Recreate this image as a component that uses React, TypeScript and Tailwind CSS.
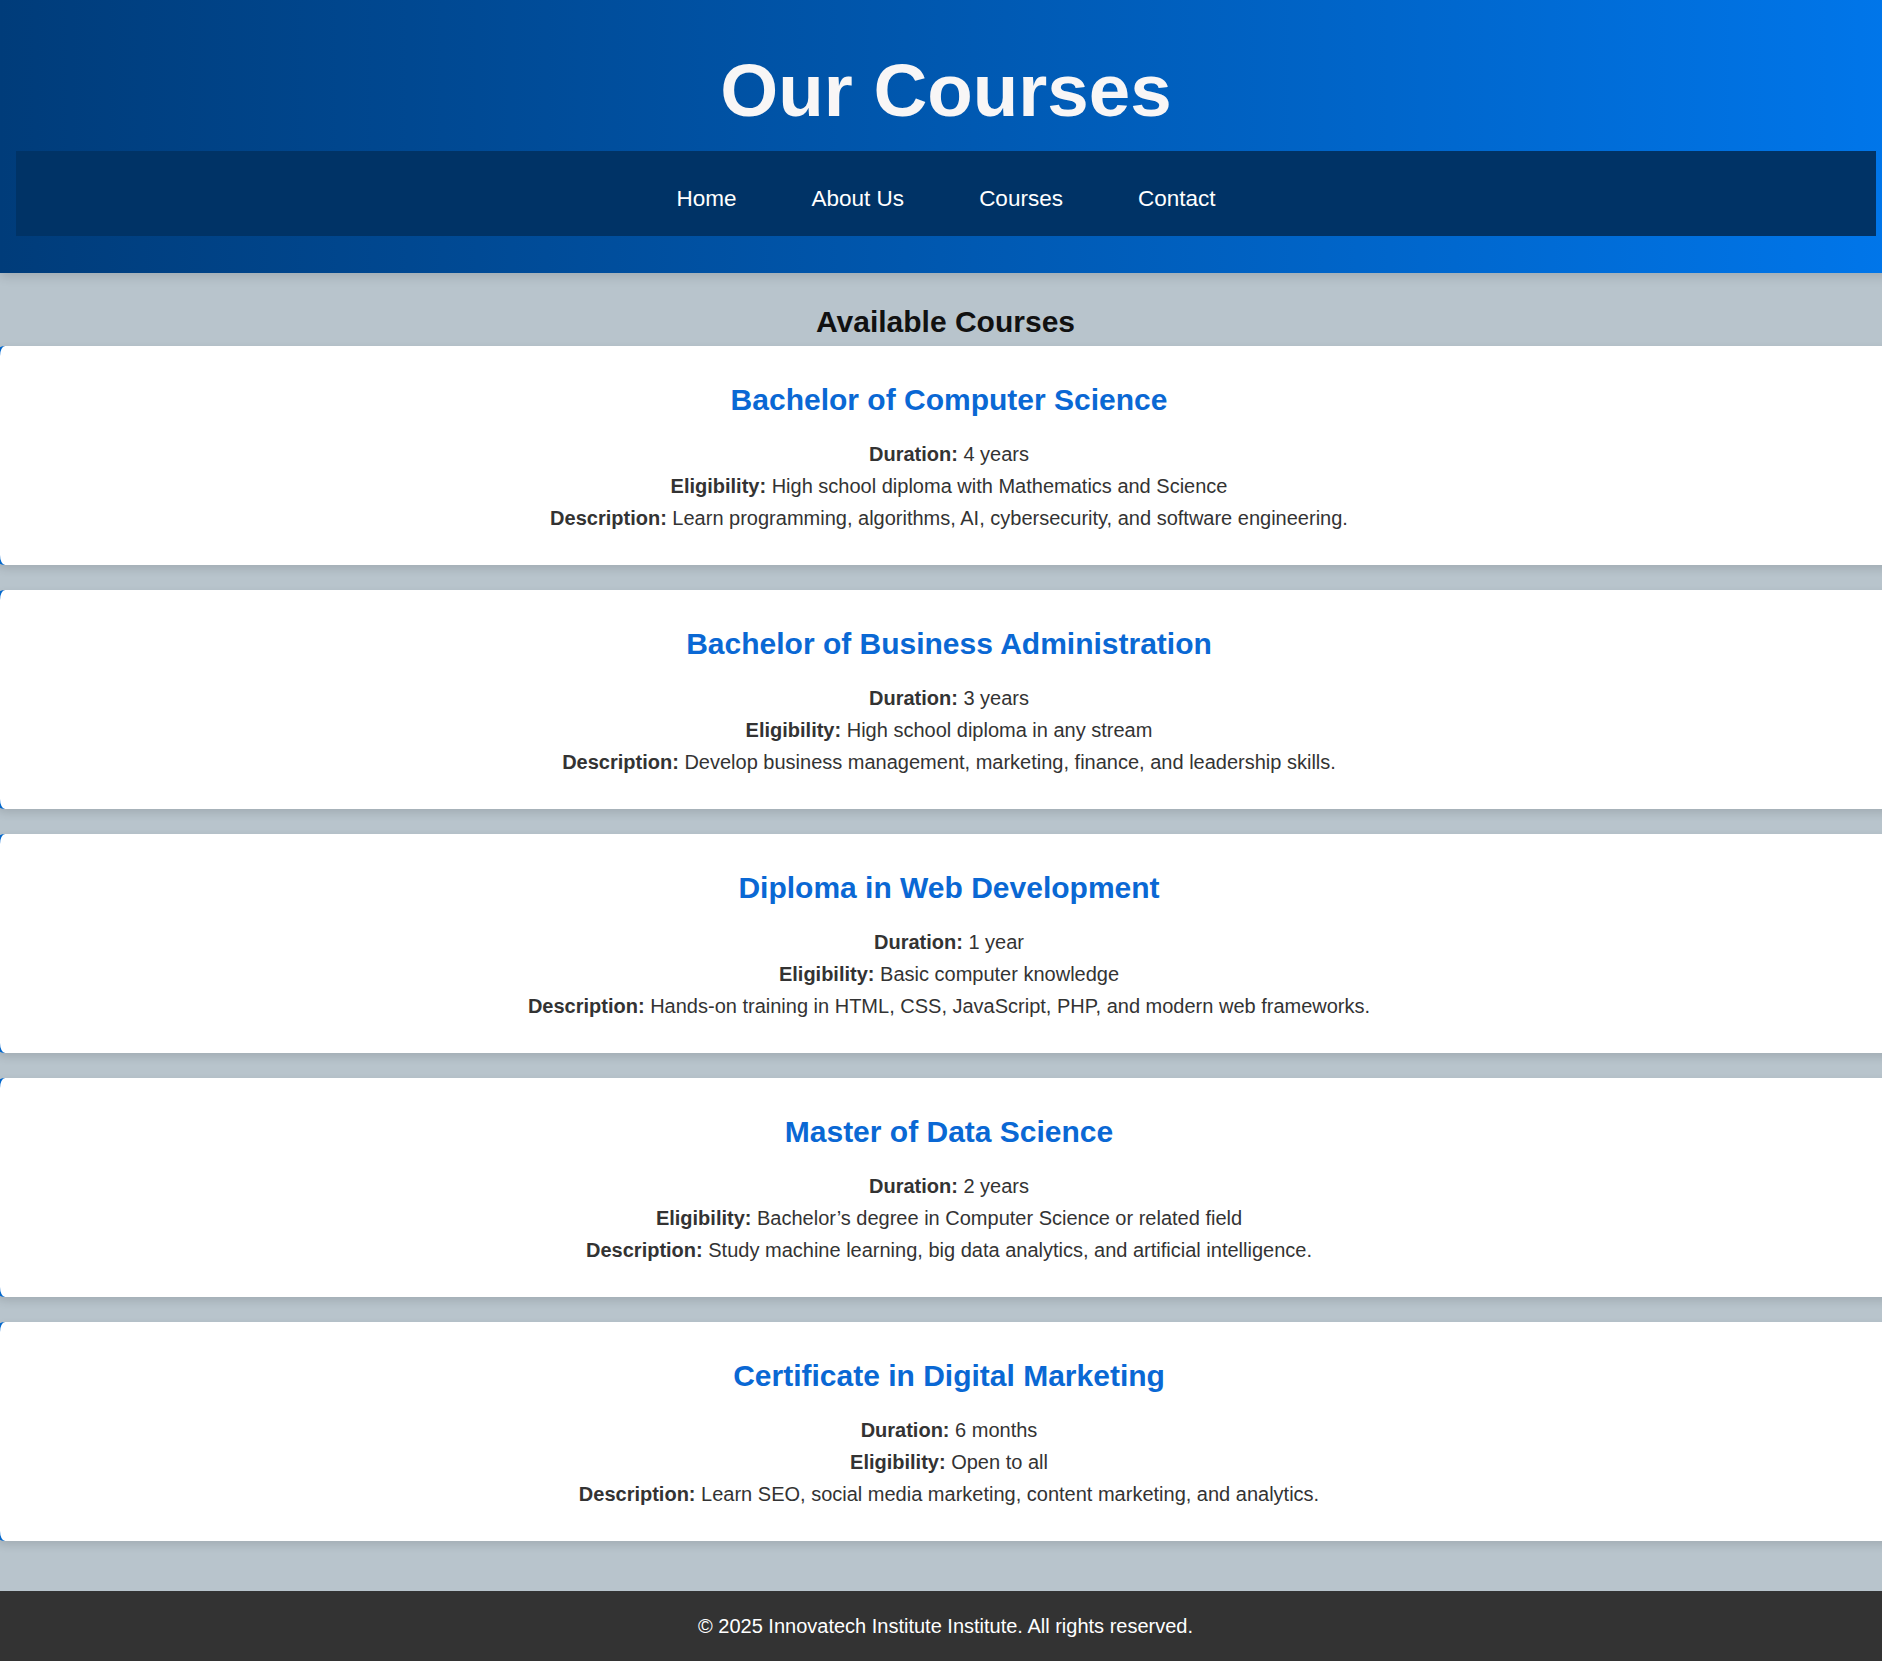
import React from "react";

const courses = [
  {
    title: "Bachelor of Computer Science",
    duration: "4 years",
    eligibility: "High school diploma with Mathematics and Science",
    description: "Learn programming, algorithms, AI, cybersecurity, and software engineering.",
  },
  {
    title: "Bachelor of Business Administration",
    duration: "3 years",
    eligibility: "High school diploma in any stream",
    description: "Develop business management, marketing, finance, and leadership skills.",
  },
  {
    title: "Diploma in Web Development",
    duration: "1 year",
    eligibility: "Basic computer knowledge",
    description: "Hands-on training in HTML, CSS, JavaScript, PHP, and modern web frameworks.",
  },
  {
    title: "Master of Data Science",
    duration: "2 years",
    eligibility: "Bachelor\u2019s degree in Computer Science or related field",
    description: "Study machine learning, big data analytics, and artificial intelligence.",
  },
  {
    title: "Certificate in Digital Marketing",
    duration: "6 months",
    eligibility: "Open to all",
    description: "Learn SEO, social media marketing, content marketing, and analytics.",
  },
];

export default function App() {
  return (
    <div className="w-full overflow-hidden bg-[#b8c4cc] font-['Liberation_Sans',Arial,sans-serif]">
      <div className="w-[1891px]">
        <header className="relative bg-gradient-to-r from-[#003c7a] to-[#0076ea] pl-[16px] pr-[15px] pt-[48px] pb-[37px] shadow-[0_4px_10px_rgba(0,0,0,0.12)]">
          <h1 className="text-center text-[74.5px] font-bold leading-[normal] text-[#f8f6f6]">Our Courses</h1>
          <nav className="mt-[18px] h-[85px] bg-[#003366] pt-[35px]">
            <ul className="flex justify-center gap-[75px] text-[22.5px] leading-[normal] text-white">
              <li>Home</li>
              <li>About Us</li>
              <li>Courses</li>
              <li>Contact</li>
            </ul>
          </nav>
        </header>

        <main className="pt-[32px] pb-[26px]">
          <h2 className="text-center text-[30px] font-bold leading-[normal] text-[#111]">Available Courses</h2>
          <div className="mt-[7px] flex flex-col gap-[25px]">
            {courses.map((c) => (
              <section
                key={c.title}
                className="-ml-[5px] w-[1903px] rounded-[10px] border-l-[5px] border-[#0066cc] bg-white pt-[37px] pb-[31px] text-center shadow-[0_4px_10px_rgba(0,0,0,0.12)]"
              >
                <h3 className="text-[30px] font-bold leading-[normal] text-[#0a68d4]">{c.title}</h3>
                <div className="mt-[21px] text-[20px] leading-[32px] text-[#333]">
                  <p>
                    <strong>Duration:</strong> {c.duration}
                  </p>
                  <p>
                    <strong>Eligibility:</strong> {c.eligibility}
                  </p>
                  <p>
                    <strong>Description:</strong> {c.description}
                  </p>
                </div>
              </section>
            ))}
          </div>
        </main>

        <footer className="mt-[24px] flex h-[70px] items-center justify-center bg-[#333333] text-[20px] text-white">
          © 2025 Innovatech Institute Institute. All rights reserved.
        </footer>
      </div>
    </div>
  );
}
